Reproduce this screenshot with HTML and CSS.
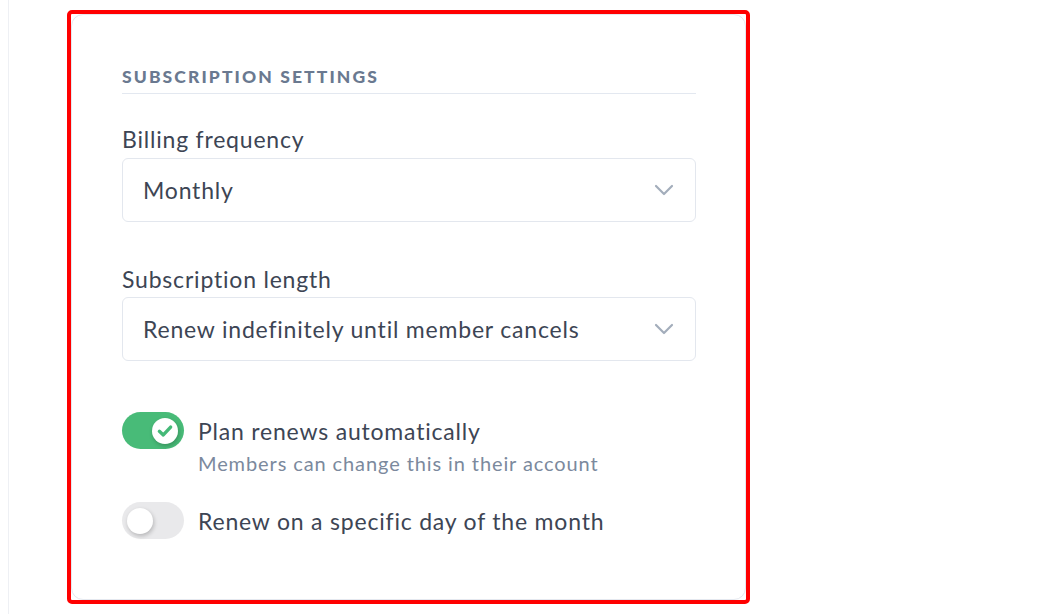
FILE: index.html
```html
<!DOCTYPE html>
<html lang="en">
<head>
<meta charset="utf-8">
<title>Subscription settings</title>
<link rel="stylesheet" href="styles.css">
</head>
<body>
<div class="page">
  <div class="frame">
    <section class="card">
      <h2 class="heading">SUBSCRIPTION SETTINGS</h2>

      <div class="field">
        <label class="label">Billing frequency</label>
        <div class="select">
          <span class="select-value">Monthly</span>
          <svg class="chevron" width="20" height="12" viewBox="0 0 20 12"><polyline points="2,2 10,10 18,2" fill="none" stroke="#a3adbb" stroke-width="2.2" stroke-linecap="round" stroke-linejoin="round"/></svg>
        </div>
      </div>

      <div class="field field-second">
        <label class="label">Subscription length</label>
        <div class="select">
          <span class="select-value">Renew indefinitely until member cancels</span>
          <svg class="chevron" width="20" height="12" viewBox="0 0 20 12"><polyline points="2,2 10,10 18,2" fill="none" stroke="#a3adbb" stroke-width="2.2" stroke-linecap="round" stroke-linejoin="round"/></svg>
        </div>
      </div>

      <div class="toggle-row toggle-row-first">
        <span class="toggle on">
          <span class="knob">
            <svg width="18" height="18" viewBox="0 0 16 16"><polyline points="3,8.3 6.5,11.5 13,4.5" fill="none" stroke="#45b978" stroke-width="3" stroke-linecap="round" stroke-linejoin="round"/></svg>
          </span>
        </span>
        <div class="toggle-text">
          <div class="toggle-title">Plan renews automatically</div>
          <div class="toggle-sub">Members can change this in their account</div>
        </div>
      </div>

      <div class="toggle-row toggle-row-second">
        <span class="toggle off"><span class="knob"></span></span>
        <div class="toggle-text">
          <div class="toggle-title">Renew on a specific day of the month</div>
        </div>
      </div>
    </section>
  </div>
</div>
</body>
</html>
```

FILE: styles.css
```css
html, body {
  margin: 0;
  padding: 0;
  background: #ffffff;
}

body {
  font-family: Lato, "Open Sans", "Liberation Sans", sans-serif;
  color: #3d4554;
}

.page {
  margin-left: 8px;
  border-left: 1px solid #eef0f4;
  min-height: 614px;
  box-sizing: border-box;
  padding: 10px 0 0 58px;
}

.frame {
  width: 683px;
  height: 594px;
  box-sizing: border-box;
  border: 4px solid #ff0000;
  border-radius: 5px;
}

.card {
  box-sizing: border-box;
  height: 100%;
  border: 1px solid #e4e8ef;
  border-radius: 12px;
  padding: 52px 49px 0 50px;
}

.heading {
  margin: 0;
  font-size: 17.5px;
  line-height: 20px;
  font-weight: 900;
  letter-spacing: 2.1px;
  color: #6a7990;
  padding-bottom: 6px;
  border-bottom: 1px solid #e3e8f0;
}

.field {
  margin-top: 31px;
}

.field-second {
  margin-top: 43px;
}

.label {
  display: block;
  font-size: 23px;
  line-height: 28px;
  letter-spacing: 0.8px;
  color: #3d4554;
  margin-bottom: 5px;
}

.field-second .label {
  margin-bottom: 4px;
}

.select {
  box-sizing: border-box;
  height: 64px;
  border: 1px solid #e3e7ee;
  border-radius: 6px;
  display: flex;
  align-items: center;
  justify-content: space-between;
  padding: 0 21px 0 20px;
}

.select-value {
  font-size: 23px;
  letter-spacing: 0.8px;
  color: #3d4554;
}

.chevron {
  display: block;
}

.toggle-row {
  display: flex;
  align-items: flex-start;
  gap: 14px;
}

.toggle-row-first {
  margin-top: 51px;
}

.toggle-row-second {
  margin-top: 27px;
}

.toggle {
  flex: none;
  width: 62px;
  height: 37px;
  border-radius: 19px;
  display: flex;
  align-items: center;
  box-sizing: border-box;
  padding: 0 6px;
}

.toggle.on {
  background: #48bb78;
  justify-content: flex-end;
}

.toggle.off {
  background: #e9e9eb;
  justify-content: flex-start;
  padding: 0 5px;
}

.knob {
  width: 26px;
  height: 26px;
  border-radius: 50%;
  background: #ffffff;
  box-shadow: 1px 2px 4px rgba(0, 0, 0, 0.22);
  display: flex;
  align-items: center;
  justify-content: center;
}

.toggle-text {
  padding-top: 5px;
}

.toggle-title {
  font-size: 23px;
  line-height: 28px;
  letter-spacing: 0.8px;
  color: #3d4554;
}

.toggle-sub {
  font-size: 20px;
  line-height: 24px;
  letter-spacing: 0.9px;
  margin-top: 6px;
  color: #7b899d;
}
```
